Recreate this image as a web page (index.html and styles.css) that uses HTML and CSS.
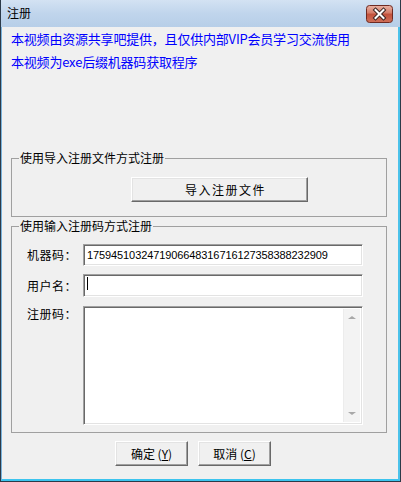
FILE: index.html
```html
<!DOCTYPE html>
<html lang="zh-CN">
<head>
    <meta charset="UTF-8">
    <title>注册</title>
    <link rel="stylesheet" href="styles.css">
</head>
<body>
    <div class="window">
        <div class="titlebar">
            <span class="title">注册</span>
            <span class="close">
                <svg width="27" height="18" viewBox="0 0 27 18">
                    <defs>
                        <linearGradient id="cg" x1="0" y1="0" x2="0" y2="1">
                            <stop offset="0" stop-color="#eab3a5"/>
                            <stop offset="0.45" stop-color="#d47a66"/>
                            <stop offset="0.5" stop-color="#c2503a"/>
                            <stop offset="1" stop-color="#d0705a"/>
                        </linearGradient>
                    </defs>
                    <rect x="0.5" y="0.5" width="26" height="17" rx="3" fill="url(#cg)" stroke="#6e2a22"/>
                    <path d="M9.5 5 L17.5 13 M17.5 5 L9.5 13" stroke="#3c2420" stroke-width="4" stroke-linecap="square"/>
                    <path d="M9.5 5 L17.5 13 M17.5 5 L9.5 13" stroke="#ffffff" stroke-width="2" stroke-linecap="square"/>
                </svg>
            </span>
        </div>
        <div class="frame">
            <p class="notice">本视频由资源共享吧提供，且仅供内部VIP会员学习交流使用</p>
            <p class="notice">本视频为exe后缀机器码获取程序</p>

            <fieldset class="group group-file">
                <legend>使用导入注册文件方式注册</legend>
                <button type="button" class="btn btn-import">导入注册文件</button>
            </fieldset>

            <fieldset class="group group-code">
                <legend>使用输入注册码方式注册</legend>
                <div class="row">
                    <label class="row-label">机器码：</label>
                    <div class="field field-code">1759451032471906648316716127358388232909</div>
                </div>
                <div class="row row-user">
                    <label class="row-label">用户名：</label>
                    <div class="field"><span class="caret"></span></div>
                </div>
                <div class="row row-reg">
                    <label class="row-label">注册码：</label>
                    <div class="field memo">
                        <div class="memo-text"></div>
                        <div class="scrollbar">
                            <span class="arrow arrow-up"></span>
                            <span class="arrow arrow-down"></span>
                        </div>
                    </div>
                </div>
            </fieldset>

            <div class="actions">
                <button type="button" class="btn btn-small">确定 (<u>Y</u>)</button>
                <button type="button" class="btn btn-small">取消 (<u>C</u>)</button>
            </div>
        </div>
    </div>
</body>
</html>
```

FILE: styles.css
```css
body {
    margin: 0;
    padding: 0;
    font-family: "Noto Sans CJK SC", "Liberation Sans", sans-serif;
    font-size: 12px;
    color: #000;
    background: #f0f0f0;
}
.window {
    width: 401px;
    height: 482px;
    box-sizing: border-box;
    border: 1px solid #2c3a48;
    border-top: 0;
    display: flex;
    flex-direction: column;
    background: #f0f0f0;
}
.titlebar {
    height: 27px;
    flex: none;
    display: flex;
    align-items: flex-start;
    justify-content: space-between;
    background: linear-gradient(#d3e2f3, #c0d5ec 50%, #b7cee8);
}
.title {
    margin: 5px 0 0 6px;
    line-height: 16px;
    color: #000;
}
.close {
    display: block;
    margin: 5px 7px 0 0;
    height: 18px;
}
.close svg {
    display: block;
}
.frame {
    flex: 1;
    border-left: 1px solid #79b3dc;
    border-right: 2px solid #4cc2ea;
    border-bottom: 2px solid #3cc4ee;
    background: #f0f0f0;
}
.notice {
    margin: 0;
    padding-left: 9px;
    line-height: 23px;
    font-size: 13px;
    letter-spacing: -0.2px;
    color: #0000ff;
    white-space: nowrap;
}
.group {
    margin: 0 11px 0 9px;
    padding: 0;
    border: 1px solid #a0a0a0;
    min-width: 0;
}
.group legend {
    margin-left: 7px;
    padding: 0 1px;
    line-height: 14px;
}
.group-file {
    margin-top: 78px;
}
.group-code {
    margin-top: 2px;
    padding-top: 1px;
    padding-bottom: 7px;
}
.btn {
    display: block;
    padding: 0;
    font-family: "Noto Sans CJK SC", "Liberation Sans", sans-serif;
    font-size: 12px;
    color: #000;
    background: #f0f0f0;
    border: 1px solid;
    border-color: #ffffff #696969 #696969 #ffffff;
    box-shadow: inset -1px -1px #a0a0a0, inset 1px 1px #e3e3e3;
    border-radius: 0;
}
.btn-import {
    width: 177px;
    height: 25px;
    margin: 12px 0 14px 119px;
    letter-spacing: 1.5px;
    padding-left: 12px;
}
.row {
    display: flex;
    align-items: center;
    margin-top: 8px;
}
.row:first-of-type {
    margin-top: 10px;
}
.row-reg {
    align-items: flex-start;
    margin-top: 9px;
}
.row-label {
    width: 65px;
    text-align: right;
    line-height: 14px;
    margin-right: 6px;
    padding-left: 4px;
    box-sizing: border-box;
    white-space: nowrap;
    letter-spacing: 0.5px;
}
.row-reg .row-label {
    padding-top: 1px;
}
.field {
    width: 280px;
    height: 22px;
    box-sizing: border-box;
    background: #fff;
    border: 1px solid;
    border-color: #a0a0a0 #ffffff #ffffff #a0a0a0;
    box-shadow: inset 1px 1px #696969, inset -1px -1px #e3e3e3;
    display: flex;
    align-items: center;
    padding-left: 3px;
}
.row-user .field {
    height: 23px;
}
.field-code {
    font-family: "Liberation Sans", sans-serif;
    font-size: 11px;
    letter-spacing: -0.1px;
}
.caret {
    display: block;
    width: 1px;
    height: 13px;
    background: #000;
    margin-top: -4px;
}
.memo {
    height: 119px;
    padding: 2px;
    align-items: stretch;
}
.memo-text {
    flex: 1;
}
.scrollbar {
    width: 16px;
    background: #f3f3f3;
    border-left: 1px solid #ececec;
    display: flex;
    flex-direction: column;
    justify-content: space-between;
    align-items: center;
    padding: 7px 0;
}
.arrow {
    width: 0;
    height: 0;
    border-left: 4px solid transparent;
    border-right: 4px solid transparent;
}
.arrow-up {
    border-bottom: 3px solid #a8a8a8;
}
.arrow-down {
    border-top: 3px solid #a8a8a8;
}
.actions {
    display: flex;
    gap: 10px;
    margin: 8px 0 0 113px;
}
.btn-small {
    width: 73px;
    height: 25px;
}
.btn-small u {
    text-decoration: underline;
}
```
